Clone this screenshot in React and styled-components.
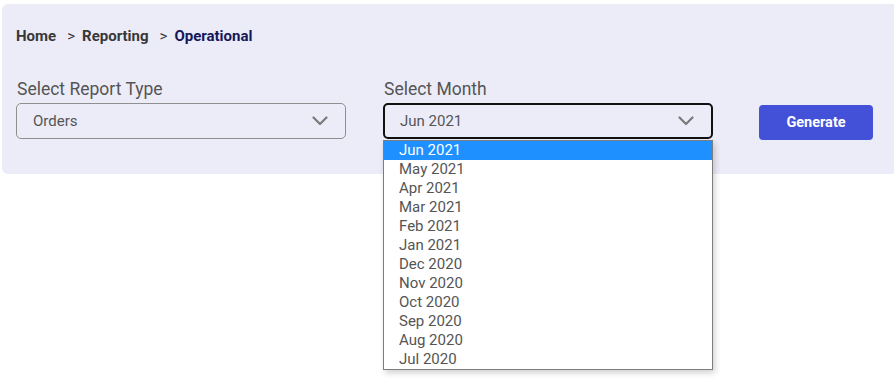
import React from 'react';
import styled, { createGlobalStyle } from 'styled-components';

const GlobalStyle = createGlobalStyle`
  html, body {
    margin: 0;
    min-height: 100%;
    background: #ffffff;
    font-family: Roboto, "Liberation Sans", sans-serif;
  }
  #root {
    min-height: 387px;
  }
`;

const months = [
  'Jun 2021', 'May 2021', 'Apr 2021', 'Mar 2021', 'Feb 2021', 'Jan 2021',
  'Dec 2020', 'Nov 2020', 'Oct 2020', 'Sep 2020', 'Aug 2020', 'Jul 2020',
];

const Chevron = () => (
  <svg width="16" height="10" viewBox="0 0 16 10" fill="none">
    <path d="M1.5 1.5 L8 8 L14.5 1.5" stroke="#7a7a7a" strokeWidth="2.2" strokeLinecap="round" strokeLinejoin="round" />
  </svg>
);

export default function App() {
  return (
    <>
      <GlobalStyle />
      <Panel>
        <Breadcrumb>
          <Crumb>Home</Crumb>
          <Sep>&gt;</Sep>
          <Crumb>Reporting</Crumb>
          <Sep>&gt;</Sep>
          <Crumb $current>Operational</Crumb>
        </Breadcrumb>
        <FormRow>
          <Field>
            <Label>Select Report Type</Label>
            <Select>
              <span>Orders</span>
              <Chevron />
            </Select>
          </Field>
          <Field>
            <Label>Select Month</Label>
            <Select $focused>
              <span>Jun 2021</span>
              <Chevron />
            </Select>
            <Options>
              {months.map((m, i) => (
                <Option key={m} $selected={i === 0}>{m}</Option>
              ))}
            </Options>
          </Field>
          <Button>Generate</Button>
        </FormRow>
      </Panel>
    </>
  );
}

const Panel = styled.div`
  margin: 4px 0 0 2px;
  height: 170px;
  box-sizing: border-box;
  padding: 23px 14px 0;
  background: #ececf9;
  border-radius: 6px 0 0 6px;
`;

const Breadcrumb = styled.div`
  display: flex;
  align-items: center;
  height: 18px;
  font-size: 15px;
  color: #333333;
`;

const Crumb = styled.span`
  font-weight: 700;
  color: ${p => (p.$current ? '#17175a' : '#383838')};
`;

const Sep = styled.span`
  margin: 0 7px 0 11px;
  color: #383838;
`;

const FormRow = styled.div`
  display: flex;
  align-items: flex-end;
  margin-top: 33px;
`;

const Field = styled.div`
  position: relative;
  display: flex;
  flex-direction: column;
  width: 330px;
  margin-right: 37px;
  &:nth-child(2) {
    margin-right: 46px;
  }
`;

const Label = styled.div`
  font-size: 17.5px;
  line-height: 22px;
  color: #555555;
  margin-bottom: 3px;
  margin-left: 1px;
`;

const Select = styled.div`
  height: 36px;
  box-sizing: border-box;
  display: flex;
  align-items: center;
  justify-content: space-between;
  padding: 0 17px 0 15px;
  border: ${p => (p.$focused ? '2px solid #111111' : '1px solid #8f8f8f')};
  padding-left: ${p => (p.$focused ? '15px' : '16px')};
  border-radius: 5px;
  font-size: 15px;
  color: #555555;
  background: #ececf9;
`;

const Options = styled.div`
  position: absolute;
  top: 100%;
  left: 0;
  width: 330px;
  box-sizing: border-box;
  margin-top: 1px;
  border: 1px solid #7d7d7d;
  background: #ffffff;
  box-shadow: 2px 3px 6px rgba(0, 0, 0, 0.18);
  z-index: 10;
`;

const Option = styled.div`
  height: 19px;
  line-height: 19px;
  padding-left: 15px;
  font-size: 15px;
  color: ${p => (p.$selected ? '#ffffff' : '#555555')};
  background: ${p => (p.$selected ? '#1e90ff' : 'transparent')};
`;

const Button = styled.button`
  width: 114px;
  height: 35px;
  margin-bottom: -1px;
  border: none;
  border-radius: 4px;
  background: #4350d8;
  color: #ffffff;
  font-family: Roboto, "Liberation Sans", sans-serif;
  font-weight: 700;
  font-size: 14.5px;
`;
